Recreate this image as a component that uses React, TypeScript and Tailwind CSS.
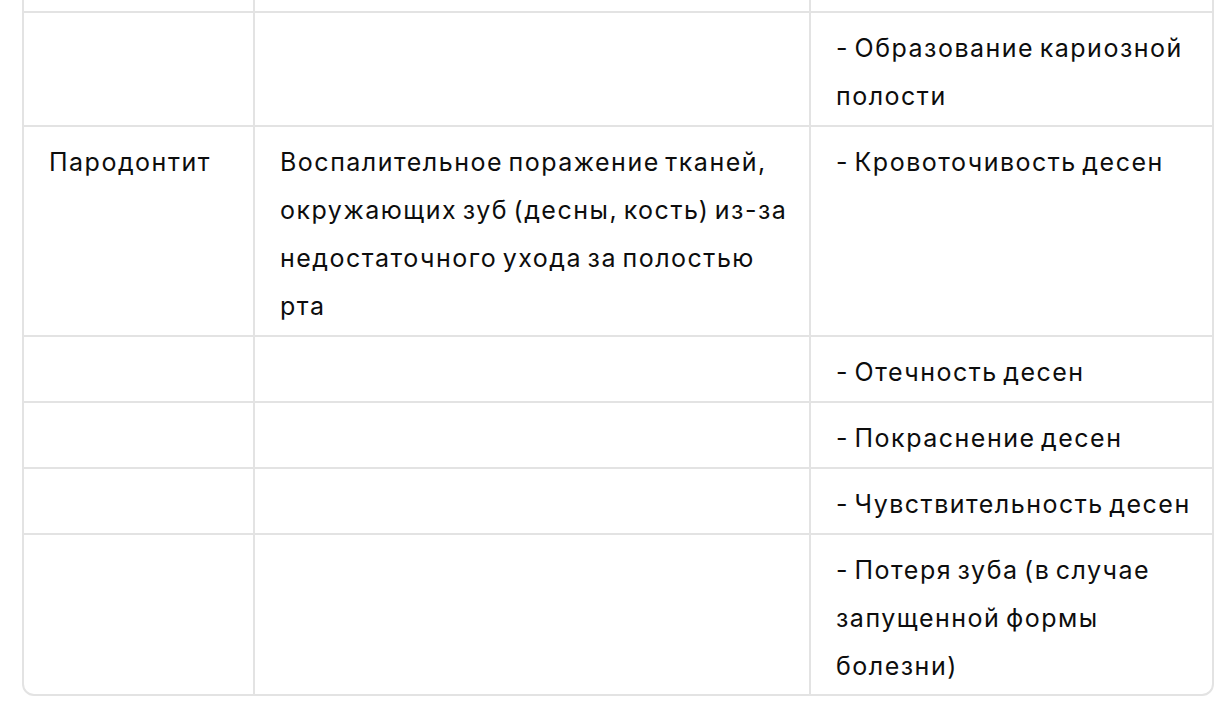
import React from "react";

type Row = { h: string; c1: string[]; c2: string[]; c3: string[]; last?: boolean };

const rows: Row[] = [
  { h: "h-[112px]", c1: [], c2: [], c3: [] },
  { h: "h-[112px]", c1: [], c2: [], c3: ["- Образование кариозной", "полости"] },
  {
    h: "h-[208px]",
    c1: ["Пародонтит"],
    c2: [
      "Воспалительное поражение тканей,",
      "окружающих зуб (десны, кость) из-за",
      "недостаточного ухода за полостью",
      "рта",
    ],
    c3: ["- Кровоточивость десен"],
  },
  { h: "h-[64px]", c1: [], c2: [], c3: ["- Отечность десен"] },
  { h: "h-[64px]", c1: [], c2: [], c3: ["- Покраснение десен"] },
  { h: "h-[64px]", c1: [], c2: [], c3: ["- Чувствительность десен"] },
  {
    h: "h-[159px]",
    c1: [],
    c2: [],
    c3: ["- Потеря зуба (в случае", "запущенной формы", "болезни)"],
    last: true,
  },
];

function Lines({ lines }: { lines: string[] }) {
  return (
    <>
      {lines.map((l, i) => (
        <div key={i} className="whitespace-nowrap">
          {l}
        </div>
      ))}
    </>
  );
}

export default function App() {
  return (
    <div className="w-[1232px] h-[719px] overflow-hidden bg-white">
      <div
        className="ml-[22px] mt-[-103px] w-[1192px] border-2 border-[#e3e3e3] rounded-[12px] overflow-hidden text-[#0d0d0d] text-[25px] leading-[48px] tracking-[1.5px] [word-spacing:-3px]"
        style={{ fontFamily: "Inter, 'Noto Sans', sans-serif" }}
      >
        {rows.map((r, i) => (
          <div key={i} className={`flex ${r.last ? "" : "border-b-2 border-[#e3e3e3]"}`}>
            <div className={`w-[231px] shrink-0 border-r-2 border-[#e3e3e3] pl-[25px] pr-6 pt-[11px] pb-[5px] ${r.h}`}>
              <Lines lines={r.c1} />
            </div>
            <div className={`w-[556px] shrink-0 border-r-2 border-[#e3e3e3] pl-[25px] pr-6 pt-[11px] pb-[5px] ${r.h}`}>
              <Lines lines={r.c2} />
            </div>
            <div className={`flex-1 pl-[25px] pr-6 pt-[11px] pb-[5px] ${r.h}`}>
              <Lines lines={r.c3} />
            </div>
          </div>
        ))}
      </div>
    </div>
  );
}
